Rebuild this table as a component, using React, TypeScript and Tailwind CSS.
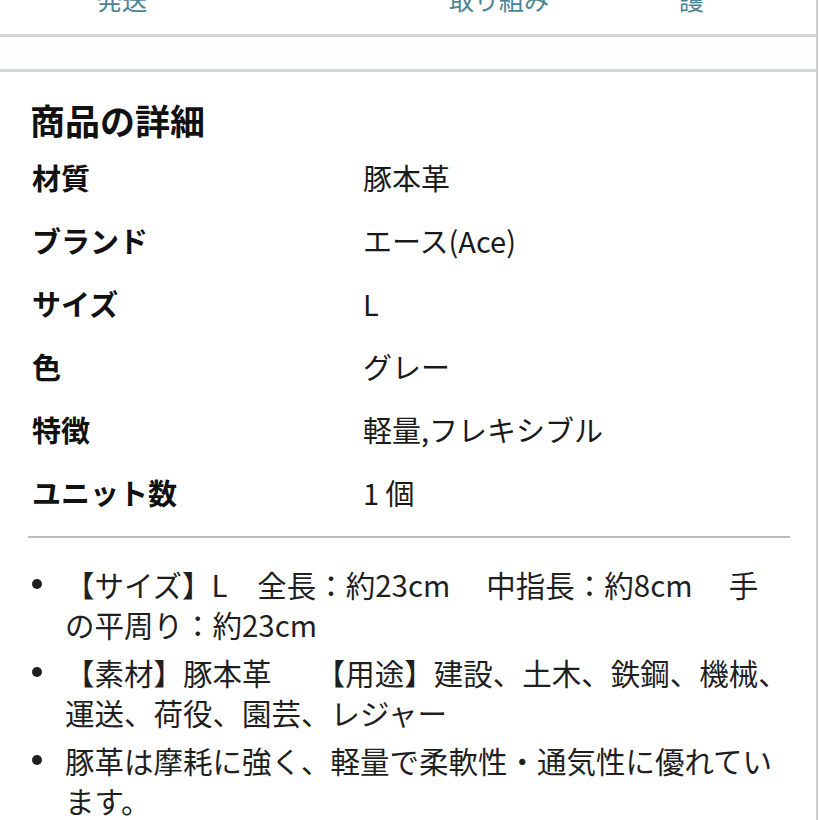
export default function App() {
  const specs: [string, string][] = [
    ['材質', '豚本革'],
    ['ブランド', 'エース(Ace)'],
    ['サイズ', 'L'],
    ['色', 'グレー'],
    ['特徴', '軽量,フレキシブル'],
    ['ユニット数', '1 個'],
  ];

  // lines kept as in the listing so the wrap matches
  const bullets: string[][] = [
    ['【サイズ】L　全長：約23cm　 中指長：約8cm　 手', 'の平周り：約23cm'],
    ['【素材】豚本革　　【用途】建設、土木、鉄鋼、機械、', '運送、荷役、園芸、レジャー'],
    ['豚革は摩耗に強く、軽量で柔軟性・通気性に優れてい', 'ます。'],
  ];

  return (
    <div
      className="w-[820px] h-[820px] overflow-hidden bg-white"
      style={{ fontFamily: '"Noto Sans CJK JP", "Noto Sans", sans-serif' }}
    >
      <div className="w-[818px] h-full border-r-2 border-[#cfcfcf]">
        {/* tab labels, cut off by the top of the view */}
        <div className="h-[34px] overflow-hidden">
          <div className="flex text-[25px] leading-[30px] text-[#4b8593] -mt-[16px]">
            <span className="ml-[97px]">発送</span>
            <span className="ml-[302px]">取り組み</span>
            <span className="ml-[130px]">護</span>
          </div>
        </div>
        <div className="h-[3px] bg-[#d6d6d6]" />
        <div className="h-[32px] bg-[#fdfefe]" />
        <div className="h-[3px] bg-[#d6d6d6]" />

        <div className="pl-[30px] pr-[28px] pt-[28px]">
          <h2 className="text-[35px] leading-[40px] font-bold text-[#111]">商品の詳細</h2>
          <div className="mt-[6px]">
            {specs.map(([k, v]) => (
              <div key={k} className="flex items-center h-[63px] text-[29px] text-[#111]">
                <div className="w-[333px] pl-[2px] font-bold">{k}</div>
                <div className="text-[#1a1a1a]">{v}</div>
              </div>
            ))}
          </div>
          <div className="mt-[12px] h-[2px] bg-[#bdbdbd] -mx-[2px]" />

          <ul className="mt-[26px]">
            {bullets.map((lines) => (
              <li key={lines[0]} className="flex text-[29.5px] leading-[40px] text-[#1f1f1f] mb-[8px]">
                <span className="w-[35px] shrink-0 h-[40px] flex items-center pl-[2px]">
                  <span className="w-[10px] h-[10px] rounded-full bg-[#1f1f1f]" />
                </span>
                <span className="whitespace-pre">
                  {lines.map((l, i) => (
                    <span key={i} className="block">{l}</span>
                  ))}
                </span>
              </li>
            ))}
          </ul>
        </div>
      </div>
    </div>
  );
}
